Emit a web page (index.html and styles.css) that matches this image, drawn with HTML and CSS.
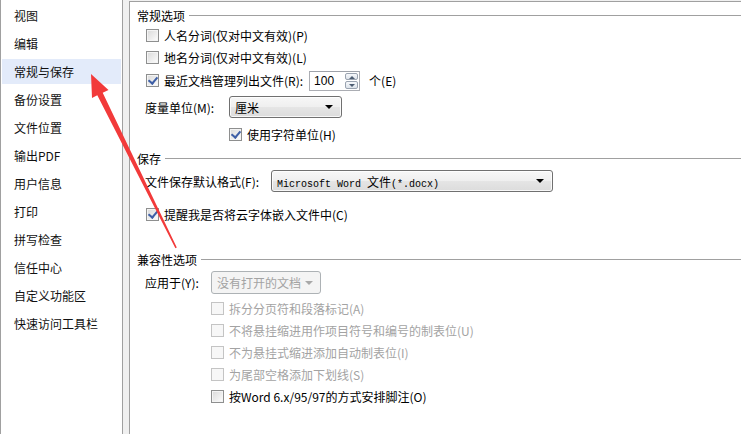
FILE: index.html
```html
<!DOCTYPE html>
<html lang="zh-CN">
<head>
<meta charset="utf-8">
<title>选项</title>
<link rel="stylesheet" href="styles.css">
</head>
<body>
<div class="window">
  <nav class="sidebar">
    <div class="nav-item">视图</div>
    <div class="nav-item">编辑</div>
    <div class="nav-item active">常规与保存</div>
    <div class="nav-item">备份设置</div>
    <div class="nav-item">文件位置</div>
    <div class="nav-item">输出PDF</div>
    <div class="nav-item">用户信息</div>
    <div class="nav-item">打印</div>
    <div class="nav-item">拼写检查</div>
    <div class="nav-item">信任中心</div>
    <div class="nav-item">自定义功能区</div>
    <div class="nav-item">快速访问工具栏</div>
  </nav>

  <main class="content">
    <!-- 常规选项 -->
    <div class="group-title"><span>常规选项</span><i class="rule"></i></div>
    <div class="row r1 indent">
      <span class="check"></span><span class="label">人名分词(仅对中文有效)(P)</span>
    </div>
    <div class="row r2 indent">
      <span class="check"></span><span class="label">地名分词(仅对中文有效)(L)</span>
    </div>
    <div class="row r2 indent">
      <span class="check checked"></span><span class="label">最近文档管理列出文件(R):</span>
      <span class="spinner">
        <span class="spin-value">100</span>
        <span class="spin-buttons"><span class="spin-up"></span><span class="spin-down"></span></span>
      </span>
      <span class="unit">个(E)</span>
    </div>
    <div class="row r-select indent-label">
      <span class="field-label w-unit">度量单位(M):</span>
      <span class="select s-unit"><span class="select-text">厘米</span><span class="arrow"></span></span>
    </div>
    <div class="row r-sub indent-sub">
      <span class="check checked"></span><span class="label">使用字符单位(H)</span>
    </div>

    <!-- 保存 -->
    <div class="group-title g-save"><span>保存</span><i class="rule"></i></div>
    <div class="row r-file indent-label">
      <span class="field-label w-format">文件保存默认格式(F):</span>
      <span class="select s-format"><span class="select-text"><span class="mono">Microsoft Word </span>文件<span class="mono">(*.docx)</span></span><span class="arrow"></span></span>
    </div>
    <div class="row r-remind indent">
      <span class="check checked"></span><span class="label">提醒我是否将云字体嵌入文件中(C)</span>
    </div>

    <!-- 兼容性选项 -->
    <div class="group-title g-compat"><span>兼容性选项</span><i class="rule"></i></div>
    <div class="row r-apply indent-label">
      <span class="field-label w-apply">应用于(Y):</span>
      <span class="select s-apply disabled"><span class="select-text">没有打开的文档</span><span class="arrow"></span></span>
    </div>
    <div class="row r-opt first indent-opt disabled">
      <span class="check"></span><span class="label">拆分分页符和段落标记(A)</span>
    </div>
    <div class="row r-opt indent-opt disabled">
      <span class="check"></span><span class="label">不将悬挂缩进用作项目符号和编号的制表位(U)</span>
    </div>
    <div class="row r-opt indent-opt disabled">
      <span class="check"></span><span class="label">不为悬挂式缩进添加自动制表位(I)</span>
    </div>
    <div class="row r-opt indent-opt disabled">
      <span class="check"></span><span class="label">为尾部空格添加下划线(S)</span>
    </div>
    <div class="row r-opt indent-opt">
      <span class="check"></span><span class="label">按Word 6.x/95/97的方式安排脚注(O)</span>
    </div>
  </main>
</div>

<!-- annotation arrow pointing at the selected category -->
<svg class="pointer" width="741" height="434" viewBox="0 0 741 434">
  <polygon points="91,74 108.5,90 102.7,92.7 176.8,247.6 175.4,248.3 97.3,95.3 92,98" fill="#f23a3a"/>
</svg>
</body>
</html>
```

FILE: styles.css
```css
* { box-sizing: border-box; }

html, body {
  margin: 0;
  padding: 0;
  width: 741px;
  height: 434px;
  overflow: hidden;
  background: #f0f0f0;
  font-family: "Noto Sans CJK SC", "Noto Sans", sans-serif;
  font-size: 12px;
  color: #1a1a1a;
}

.window {
  display: flex;
  height: 434px;
  gap: 6px;
}

/* left category list */
.sidebar {
  width: 123px;
  flex: none;
  background: #fff;
  border-left: 1px solid #a0a0a0;
  border-right: 1px solid #a0a0a0;
  padding-top: 3px;
  display: flex;
  flex-direction: column;
  gap: 3px;
}

.nav-item {
  height: 25px;
  line-height: 25px;
  padding-left: 12px;
  margin: 0 1px;
  color: #111;
  white-space: nowrap;
}

.nav-item.active { background: #e3ebfa; }

/* right settings panel */
.content {
  flex: 1;
  margin-top: 1px;
  background: #fff;
  border-top: 1px solid #a0a0a0;
  border-left: 1px solid #a0a0a0;
  display: flex;
  flex-direction: column;
}

.group-title {
  display: flex;
  align-items: center;
  height: 22px;
  padding-top: 4px;
  padding-left: 7px;
  color: #000;
  white-space: nowrap;
}

.group-title .rule {
  flex: 1;
  height: 1px;
  margin-left: 4px;
  background: #a0a0a0;
}

.g-save { height: 24px; padding-top: 0; }
.g-compat { height: 24px; padding-top: 0; margin-top: 22px; }

.row {
  display: flex;
  align-items: center;
  height: 22px;
  white-space: nowrap;
  color: #000;
}

.r1 { height: 22px; }
.r2 { height: 23px; }
.r-select { height: 30px; }
.r-sub { height: 24px; }
.r-file { height: 22px; }
.r-remind { height: 22px; margin-top: 11px; }
.r-apply { height: 23px; }
.r-opt { height: 22px; }
.r-opt.first { margin-top: 3px; }

.indent { padding-left: 16px; }
.indent-label { padding-left: 15px; }
.indent-sub { padding-left: 99px; }
.indent-opt { padding-left: 81px; }

.row.disabled .label { color: #a3a3a3; }

/* checkbox */
.check {
  position: relative;
  width: 13px;
  height: 13px;
  flex: none;
  margin-right: 5px;
  border: 1px solid #8e8f8f;
  background: linear-gradient(135deg, #d9d9d9 0%, #f2f2f2 70%, #ffffff 100%);
  box-shadow: inset 0 0 0 1px #f4f4f4;
}

.row.disabled .check {
  border-color: #c4c4c4;
  background: #f7f7f7;
  box-shadow: none;
}

.check.checked::after {
  content: "";
  position: absolute;
  left: 3px;
  top: 0px;
  width: 4px;
  height: 7px;
  border-right: 2px solid #3e5fa6;
  border-bottom: 2px solid #3e5fa6;
  transform: rotate(40deg);
}

/* number spinner */
.spinner {
  display: flex;
  align-items: stretch;
  width: 51px;
  height: 20px;
  margin-left: 6px;
  border: 1px solid #abadb3;
  border-top-color: #9ea2aa;
  background: #fff;
  font-family: "Liberation Sans", Arial, sans-serif;
}

.spin-value {
  flex: 1;
  padding-left: 4px;
  line-height: 18px;
  font-size: 12px;
}

.spin-buttons {
  width: 14px;
  display: flex;
  flex-direction: column;
  gap: 1px;
  padding: 1px 1px 1px 0;
}

.spin-up, .spin-down {
  position: relative;
  flex: 1;
  border: 1px solid #9aa3b0;
  border-radius: 2px;
  background: linear-gradient(#f6f8fb, #dde3ea);
}

.spin-up::after, .spin-down::after {
  content: "";
  position: absolute;
  left: 3px;
  top: 2px;
  border-left: 3px solid transparent;
  border-right: 3px solid transparent;
}

.spin-up::after { border-bottom: 3px solid #4d5d72; }
.spin-down::after { border-top: 3px solid #4d5d72; }

.unit { margin-left: 9px; }

/* labels before dropdowns */
.field-label { flex: none; }
.w-unit { width: 84px; }
.w-format { width: 126px; }
.w-apply { width: 66px; }

/* dropdown */
.select {
  position: relative;
  display: flex;
  align-items: center;
  height: 22px;
  padding-left: 5px;
  border: 1px solid #707070;
  border-radius: 3px;
  background: linear-gradient(#f7f7f7 0%, #efefef 50%, #e5e5e5 51%, #dcdcdc 100%);
  color: #000;
  box-shadow: inset 0 0 0 1px rgba(255, 255, 255, 0.8);
}

.s-unit { width: 113px; }
.s-format { width: 282px; }
.s-apply { width: 110px; height: 23px; }

.select .arrow {
  position: absolute;
  right: 8px;
  top: 8px;
  border-left: 4px solid transparent;
  border-right: 4px solid transparent;
  border-top: 4px solid #000;
}

.select.disabled {
  border-color: #adb2b5;
  background: #f4f4f4;
  color: #a3a3a3;
  box-shadow: none;
}

.select.disabled .arrow { border-top-color: #a8a8a8; right: 7px; top: 9px; }

.mono {
  font-family: "Liberation Mono", monospace;
  font-size: 10px;
  white-space: pre;
}

/* annotation overlay */
.pointer {
  position: fixed;
  left: 0;
  top: 0;
  pointer-events: none;
}
```
